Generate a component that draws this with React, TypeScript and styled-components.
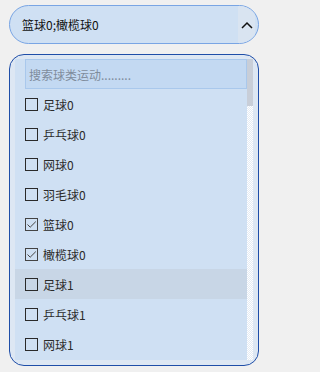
import * as React from 'react'
import styled, { createGlobalStyle } from 'styled-components'

const GlobalStyle = createGlobalStyle`
  html, body {
    margin: 0;
    padding: 0;
    background: #f0f0f0;
  }
  body {
    font-family: "Noto Sans CJK SC", "Noto Sans", sans-serif;
  }
`

const Page = styled.div`
  width: 267px;
  height: 372px;
  padding: 5px 8px 0 9px;
  box-sizing: border-box;
  display: flex;
  flex-direction: column;
  gap: 10px;
`

const Combo = styled.div`
  height: 39px;
  box-sizing: border-box;
  border: 1px solid #79a5e4;
  border-radius: 20px;
  background: #cfe0f3;
  display: flex;
  align-items: stretch;
  overflow: hidden;
  padding-right: 3px;
`

const ComboText = styled.div`
  flex: 1;
  display: flex;
  align-items: center;
  padding-left: 12px;
  font-size: 12px;
  color: #111;
`

const ArrowButton = styled.div`
  width: 17px;
  background: #d9e4f1;
  display: flex;
  align-items: center;
  justify-content: center;
`

const Panel = styled.div`
  height: 312px;
  box-sizing: border-box;
  border: 1.5px solid #1f4ea8;
  border-radius: 15px;
  background: #dde7f3;
  padding: 4px 5px 5px 5px;
  display: flex;
  overflow: hidden;
`

const ListColumn = styled.div`
  flex: 1;
  background: #cfe0f3;
  display: flex;
  flex-direction: column;
`

const Search = styled.input`
  height: 30px;
  box-sizing: border-box;
  margin: 0 0 0 10px;
  border: 1px solid #a9c8ec;
  background: #c3d9f2;
  padding: 0 3px;
  font-family: inherit;
  font-size: 12px;
  color: #333;
  outline: none;
  &::placeholder {
    color: #7f8c9c;
  }
`

const Row = styled.div<{ $hover?: boolean }>`
  height: 30px;
  display: flex;
  align-items: center;
  gap: 5px;
  padding-left: 10px;
  background: ${p => (p.$hover ? '#c8d6e6' : 'transparent')};
  font-size: 12px;
  color: #2a2a2a;
`

const Box = styled.div<{ $checked?: boolean }>`
  width: 13px;
  height: 13px;
  box-sizing: border-box;
  border: 1px solid ${p => (p.$checked ? '#444' : '#2a2a2a')};
  display: flex;
  align-items: center;
  justify-content: center;
`

const ScrollBar = styled.div`
  width: 6px;
  display: flex;
  flex-direction: column;
  background: repeating-conic-gradient(#e4ebf4 0 25%, #ffffff 0 50%) 0 0 / 2px 2px;
`

const Thumb = styled.div`
  height: 47px;
  background: #c8ced8;
`

const items = [
  { name: '足球0' },
  { name: '乒乓球0' },
  { name: '网球0' },
  { name: '羽毛球0' },
  { name: '篮球0', checked: true },
  { name: '橄榄球0', checked: true },
  { name: '足球1', hover: true },
  { name: '乒乓球1' },
  { name: '网球1' },
]

export default function App() {
  return (
    <Page>
      <GlobalStyle />
      <Combo>
        <ComboText>篮球0;橄榄球0</ComboText>
        <ArrowButton>
          <svg width="12" height="8" viewBox="0 0 12 8">
            <path d="M1 7 L6 2 L11 7" fill="none" stroke="#111" strokeWidth="1.5" />
          </svg>
        </ArrowButton>
      </Combo>
      <Panel>
        <ListColumn>
          <Search placeholder="搜索球类运动........." />
          {items.map(x => (
            <Row key={x.name} $hover={x.hover}>
              <Box $checked={x.checked}>
                {x.checked && (
                  <svg width="11" height="11" viewBox="0 0 11 11">
                    <path d="M1.5 5.5 L4.2 8.2 L9.8 2.6" fill="none" stroke="#444" strokeWidth="1" />
                  </svg>
                )}
              </Box>
              {x.name}
            </Row>
          ))}
        </ListColumn>
        <ScrollBar>
          <Thumb />
        </ScrollBar>
      </Panel>
    </Page>
  )
}
